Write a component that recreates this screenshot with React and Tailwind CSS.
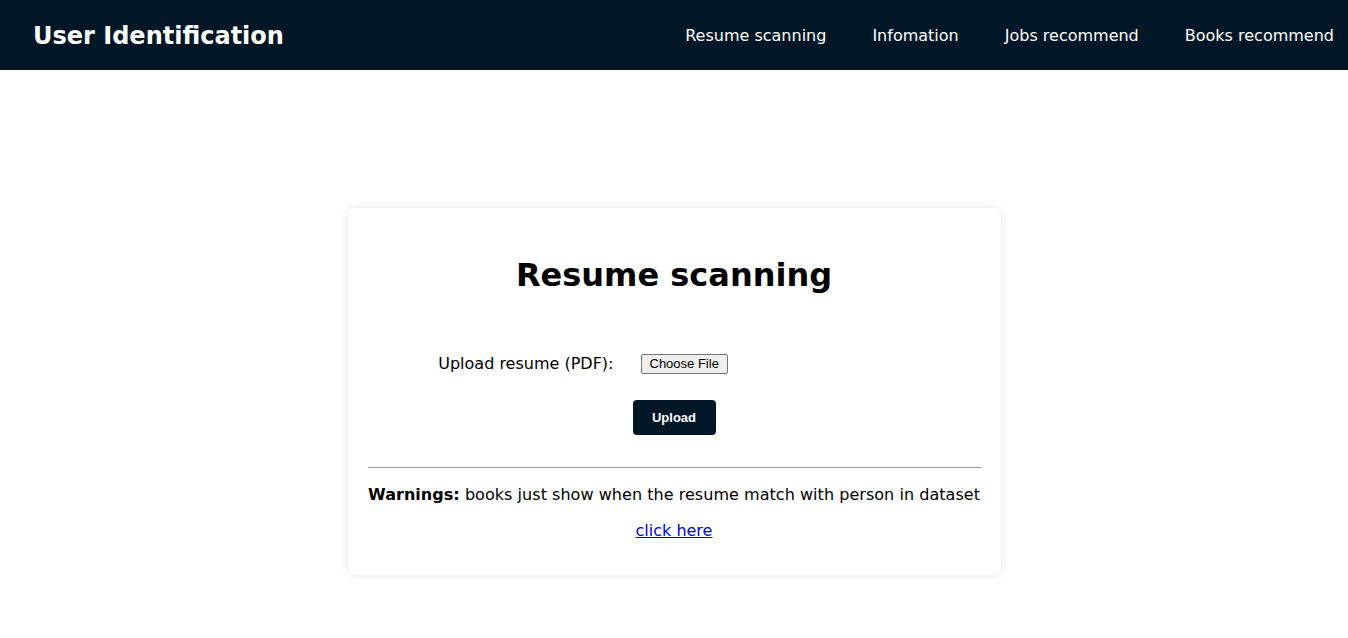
export default function App() {
  return (
    <div className="min-h-[638px] bg-white font-['DejaVu_Sans',sans-serif] text-black">
      <nav className="h-[70px] bg-[#011627] flex items-center justify-between pl-[33px] pr-[14px]">
        <h1 className="text-[24px] font-bold text-white leading-none pt-[2px]">User Identification</h1>
        <ul className="flex items-center gap-[46px] text-[16px] text-white pt-[2px]">
          <li><a href="#">Resume scanning</a></li>
          <li><a href="#">Infomation</a></li>
          <li><a href="#">Jobs recommend</a></li>
          <li><a href="#">Books recommend</a></li>
        </ul>
      </nav>

      <div className="flex justify-center pt-[138px]">
        <div className="w-[653px] rounded-[8px] bg-white px-[20px] pb-[32px] shadow-[0_0_10px_rgba(0,0,0,0.1)]">
          <h2 className="mt-[47px] text-center text-[32px] font-bold leading-[40px]">Resume scanning</h2>

          <form className="flex flex-col items-center" onSubmit={e => e.preventDefault()}>
            <div className="mt-[57px] flex h-[24px] w-full items-center">
              <label htmlFor="resume" className="w-[246px] text-right text-[16px]">Upload resume (PDF):</label>
              <label className="ml-[27px] h-[20px] cursor-pointer rounded-[2px] border border-[#767676] bg-[#efefef] px-[8px] font-['Liberation_Sans',sans-serif] text-[13px] leading-[18px]">
                Choose File
                <input id="resume" type="file" accept=".pdf" className="hidden" />
              </label>
            </div>
            <button type="submit" className="mt-[24px] h-[35px] w-[83px] rounded-[4px] bg-[#011627] font-['Liberation_Sans',sans-serif] text-[13px] font-bold text-white">
              Upload
            </button>
          </form>

          <hr className="mt-[32px] border-t border-[#999]" />
          <p className="mt-[15px] text-center text-[16px] leading-[24px] tracking-[0.04px]">
            <b>Warnings:</b> books just show when the resume match with person in dataset
          </p>
          <p className="mt-[12px] text-center text-[16px] leading-[24px]">
            <a href="#" className="text-[#0000ee] underline">click here</a>
          </p>
        </div>
      </div>
    </div>
  )
}
